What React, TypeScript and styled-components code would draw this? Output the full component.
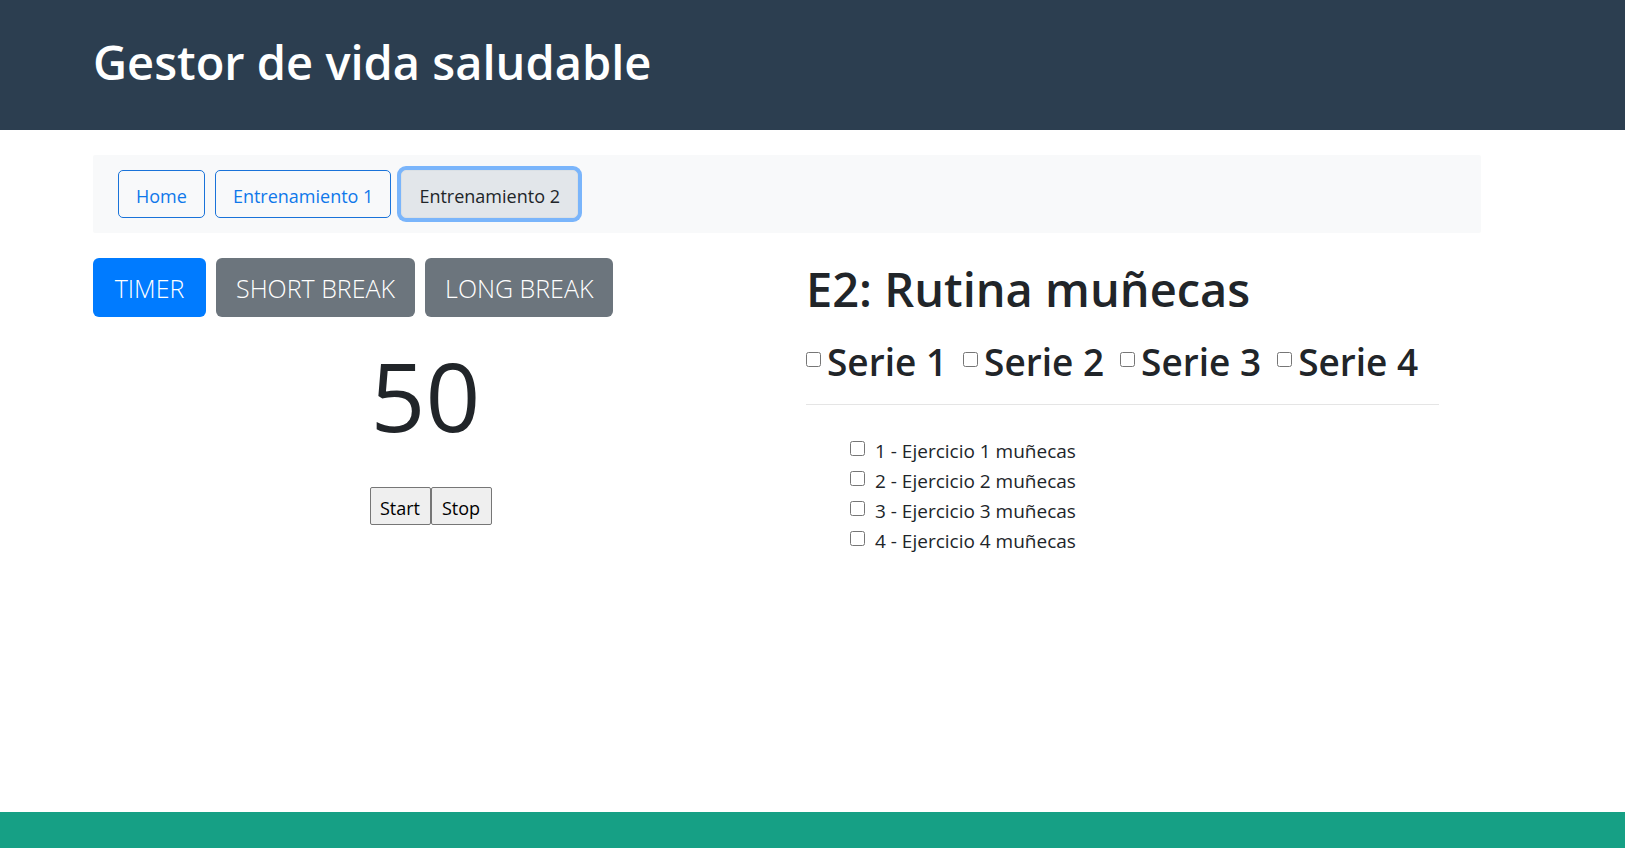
import React, { useState } from 'react';
import styled, { createGlobalStyle } from 'styled-components';

const GlobalStyle = createGlobalStyle`
  *, *::before, *::after { box-sizing: border-box; }
  body {
    margin: 0;
    background: #fff;
    color: #212529;
    font-family: 'Segoe UI', 'Open Sans', 'Noto Sans', sans-serif;
    font-size: 18px;
    line-height: 30px;
  }
  button, input { font-family: inherit; }
`;

const Page = styled.div`
  display: flex;
  flex-direction: column;
  min-height: 100vh;
`;

const Container = styled.div`
  max-width: 1426px;
  margin: 0 auto;
  padding: 0 19px;
`;

const Header = styled.header`
  padding: 32px 51px 38px 0;
  background: #2c3e50;
  color: #fff;
`;

const Title = styled.h1`
  margin: 0;
  font-size: 47px;
  font-weight: 600;
  line-height: 60px;
`;

const Main = styled.main`
  flex: 1;
  padding: 25px 51px 25px 0;
`;

const NavBar = styled.nav`
  display: flex;
  flex-wrap: wrap;
  gap: 10px;
  padding: 15px 25px;
  border-radius: 2px;
  background: #f8f9fa;
`;

const NavButton = styled.button<{ $active: boolean }>`
  padding: 12px 17px 8px;
  border: 1px solid ${p => (p.$active ? '#dae0e5' : '#1a73d9')};
  border-radius: 5px;
  background: ${p => (p.$active ? '#e2e6ea' : 'transparent')};
  box-shadow: ${p => (p.$active ? '0 0 0 4px #7ab5fb' : 'none')};
  color: ${p => (p.$active ? '#212529' : '#0f78ea')};
  font-size: 18px;
  line-height: 26px;
  cursor: pointer;
`;

const Columns = styled.div`
  display: grid;
  grid-template-columns: 1fr 1fr;
  gap: 38px;
  padding-top: 25px;
`;

const ModeBar = styled.div`
  display: flex;
  flex-wrap: wrap;
  gap: 10px;
`;

const ModeButton = styled.button<{ $active: boolean }>`
  min-width: 113px;
  padding: 11px 20px 10px;
  border: 0;
  border-radius: 6px;
  background: ${p => (p.$active ? '#007bff' : '#6c757d')};
  color: #fff;
  font-size: 25px;
  font-weight: 300;
  line-height: 38px;
  cursor: pointer;
`;

const Counter = styled.div`
  padding: 18px 10px 32px 0;
  font-size: 96px;
  line-height: 120px;
  text-align: center;
`;

const Controls = styled.div`
  display: flex;
  justify-content: center;
`;

const ControlButton = styled.button`
  min-width: 61px;
  padding: 7px 8px 3px;
  border: 1px solid #767676;
  border-radius: 2px;
  background: #efefef;
  color: #000;
  font-size: 18px;
  line-height: 26px;
  cursor: pointer;
`;

const Routine = styled.section`
  padding-right: 42px;
`;

const RoutineTitle = styled.h2`
  margin: 0;
  font-size: 47px;
  font-weight: 600;
  line-height: 62px;
`;

const SeriesRow = styled.div`
  display: flex;
  flex-wrap: wrap;
  gap: 16px;
  padding: 18px 0 18px;
  border-bottom: 1px solid #e5e5e5;
`;

const SeriesLabel = styled.label`
  display: flex;
  align-items: center;
  gap: 6px;
  font-size: 37px;
  font-weight: 600;
  line-height: 48px;
`;

const Tick = styled.input`
  width: 15px;
  height: 15px;
  margin: 0 0 6px;
`;

const ExerciseList = styled.ul`
  margin: 0;
  padding: 31px 0 0 44px;
  font-size: 19px;
  list-style: none;
`;

const ExerciseLabel = styled.label`
  display: flex;
  align-items: center;
  gap: 10px;
`;

const Footer = styled.footer`
  height: 36px;
  background: #16a085;
`;

const tabs = ['Home', 'Entrenamiento 1', 'Entrenamiento 2'];
const modes = ['TIMER', 'SHORT BREAK', 'LONG BREAK'];
const numbers = [1, 2, 3, 4];

export default function App() {
  const [tab, setTab] = useState(tabs[2]);
  const [mode, setMode] = useState(modes[0]);

  return (
    <Page>
      <GlobalStyle />
      <Header>
        <Container>
          <Title>Gestor de vida saludable</Title>
        </Container>
      </Header>
      <Main>
        <Container>
          <NavBar>
            {tabs.map(t => (
              <NavButton key={t} type="button" $active={t === tab} onClick={() => setTab(t)}>
                {t}
              </NavButton>
            ))}
          </NavBar>
          <Columns>
            <section>
              <ModeBar>
                {modes.map(m => (
                  <ModeButton key={m} type="button" $active={m === mode} onClick={() => setMode(m)}>
                    {m}
                  </ModeButton>
                ))}
              </ModeBar>
              <Counter>50</Counter>
              <Controls>
                <ControlButton type="button">Start</ControlButton>
                <ControlButton type="button">Stop</ControlButton>
              </Controls>
            </section>
            <Routine>
              <RoutineTitle>E2: Rutina muñecas</RoutineTitle>
              <SeriesRow>
                {numbers.map(n => (
                  <SeriesLabel key={n}>
                    <Tick type="checkbox" />
                    Serie {n}
                  </SeriesLabel>
                ))}
              </SeriesRow>
              <ExerciseList>
                {numbers.map(n => (
                  <li key={n}>
                    <ExerciseLabel>
                      <Tick type="checkbox" />
                      {n} - Ejercicio {n} muñecas
                    </ExerciseLabel>
                  </li>
                ))}
              </ExerciseList>
            </Routine>
          </Columns>
        </Container>
      </Main>
      <Footer />
    </Page>
  );
}
